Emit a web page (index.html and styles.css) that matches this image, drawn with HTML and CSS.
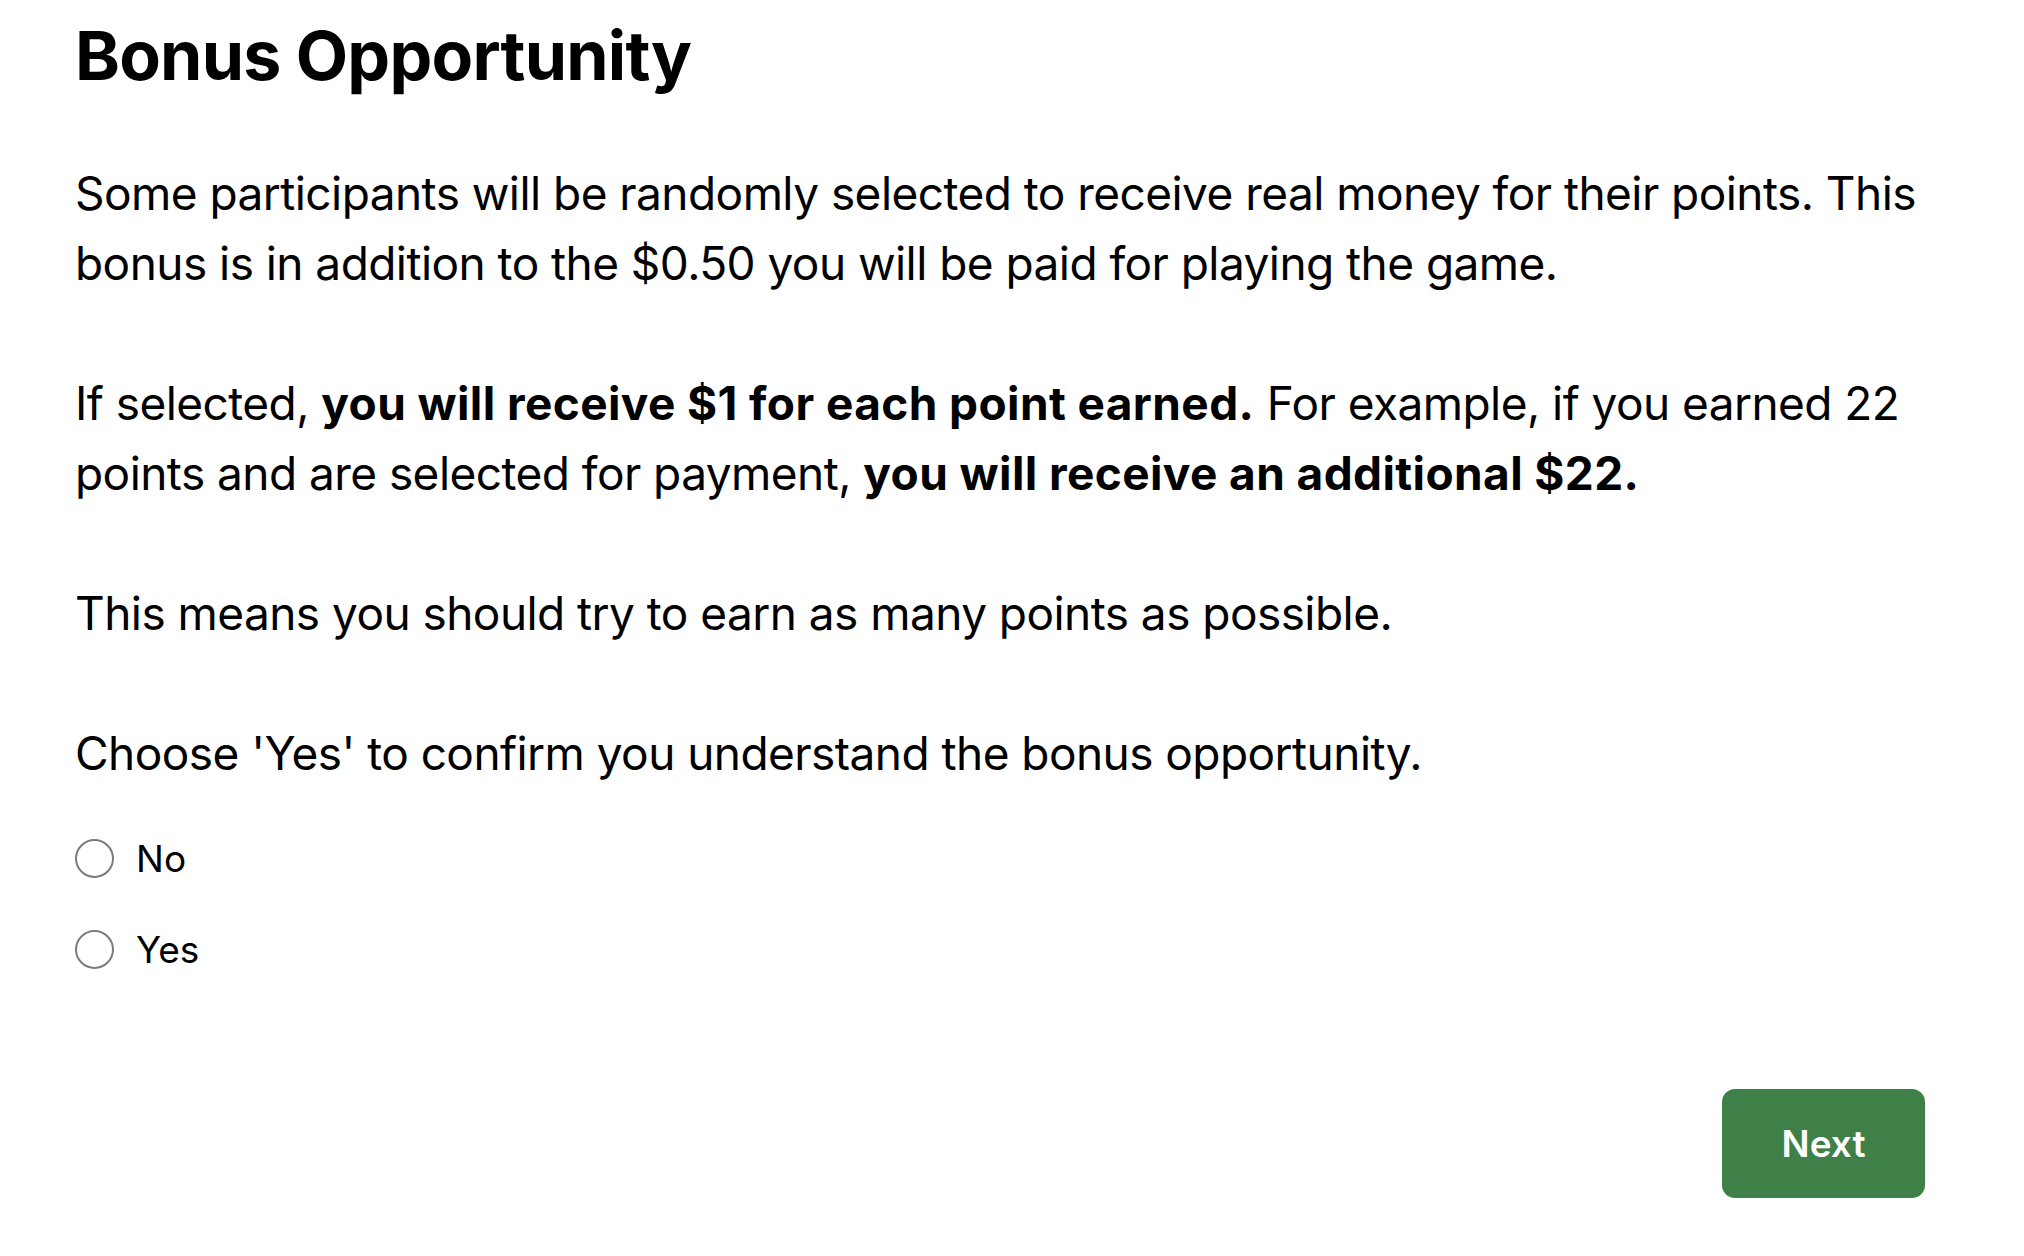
FILE: index.html
```html
<!DOCTYPE html>
<html lang="en">
<head>
<meta charset="utf-8">
<title>Bonus Opportunity</title>
<link rel="stylesheet" href="styles.css">
</head>
<body>
<main class="page">
  <h1 class="title">Bonus Opportunity</h1>
  <div class="copy">
    <p class="para">Some participants will be randomly selected to receive real money for their points. This bonus is in addition to the $0.50 you will be paid for playing the game.</p>
    <p class="para">If selected, <strong>you will receive $1 for each point earned.</strong> For example, if you earned 22 points and are selected for payment, <strong>you will receive an additional $22.</strong></p>
    <p class="para">This means you should try to earn as many points as possible.</p>
    <p class="para">Choose 'Yes' to confirm you understand the bonus opportunity.</p>
  </div>
  <div class="choices">
    <label class="choice"><input class="radio" type="radio" name="confirm" value="no"><span>No</span></label>
    <label class="choice"><input class="radio" type="radio" name="confirm" value="yes"><span>Yes</span></label>
  </div>
  <div class="actions">
    <button class="next" type="button">Next</button>
  </div>
</main>
</body>
</html>
```
FILE: styles.css
```css
html, body {
  margin: 0;
  padding: 0;
  background: #ffffff;
}

body {
  font-family: Inter, "Liberation Sans", Arial, sans-serif;
  color: #000000;
}

.page {
  width: 1850px;
  padding: 20px 0 0 75px;
  box-sizing: content-box;
}

.title {
  margin: 0;
  font-size: 68px;
  line-height: 70px;
  font-weight: 700;
  letter-spacing: -0.8px;
}

.copy {
  margin-top: 68px;
}

.para {
  margin: 0 0 70px 0;
  font-size: 46px;
  line-height: 70px;
  letter-spacing: -0.55px;
}

.para:last-child {
  margin-bottom: 0;
}

.para strong {
  font-weight: 700;
  letter-spacing: 0.4px;
}

.choices {
  display: flex;
  flex-direction: column;
  margin-top: 25px;
}

.choice {
  display: flex;
  align-items: center;
  gap: 22px;
  height: 91px;
  font-size: 37px;
}

.radio {
  appearance: none;
  -webkit-appearance: none;
  margin: 0;
  width: 39px;
  height: 39px;
  border: 2px solid #7b7b7b;
  border-radius: 50%;
  box-sizing: border-box;
  background: #ffffff;
}

.actions {
  display: flex;
  justify-content: flex-end;
  margin-top: 94px;
}

.next {
  width: 203px;
  height: 109px;
  border: none;
  border-radius: 13px;
  background: #3e8048;
  color: #ffffff;
  font-family: Inter, "Liberation Sans", Arial, sans-serif;
  font-size: 37px;
  font-weight: 600;
}
```
